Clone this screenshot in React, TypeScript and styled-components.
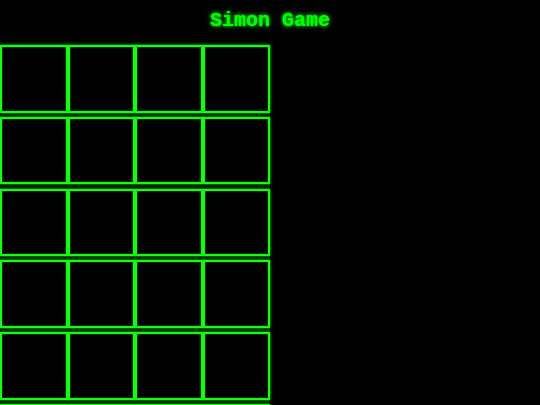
import React from "react";
import styled, { createGlobalStyle } from "styled-components";

const Global = createGlobalStyle`
  html, body {
    margin: 0;
    padding: 0;
    background: #000;
    overflow: hidden;
  }
  body {
    font-family: "Liberation Mono", "Courier New", monospace;
  }
`;

const Page = styled.div`
  width: 540px;
  height: 405px;
  background: #000;
  overflow: hidden;
`;

const Title = styled.h1`
  margin: 0;
  padding-top: 9px;
  height: 45px;
  box-sizing: border-box;
  text-align: center;
  font-family: "Liberation Mono", "Courier New", monospace;
  font-size: 20px;
  font-weight: bold;
  line-height: 23px;
  color: #00ff00;
  text-shadow: 0 0 3px #00ff00, 0 0 6px rgba(0, 255, 0, 0.5);
`;

const Board = styled.div`
  width: 270px;
  display: grid;
  grid-template-columns: repeat(4, 67.5px);
  grid-auto-rows: 67.5px;
  row-gap: 4.25px;
`;

const Cell = styled.div`
  box-sizing: border-box;
  border: 2px solid #14ff14;
  background: #000;
  box-shadow: 0 0 3px #00ff00, inset 0 0 2px rgba(0, 255, 0, 0.6);
`;

export default function App() {
  const cells = Array.from({ length: 24 }, (_, i) => i);
  return (
    <Page>
      <Global />
      <Title>Simon Game</Title>
      <Board>
        {cells.map((i) => (
          <Cell key={i} />
        ))}
      </Board>
    </Page>
  );
}
